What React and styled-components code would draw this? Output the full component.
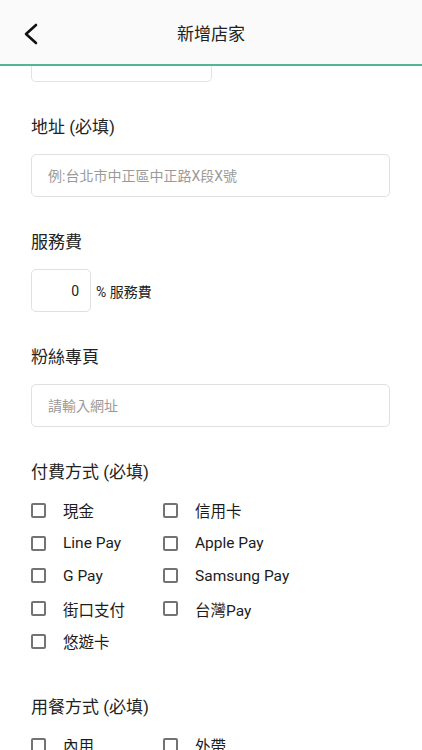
import React from 'react'
import styled, { createGlobalStyle } from 'styled-components'

const GlobalStyle = createGlobalStyle`
body {
    margin: 0;
    background: #ffffff;
    font-family: Roboto, "Noto Sans CJK TC", sans-serif;
    color: #222222;
}
`;

const Page = styled.div`
width: 422px;
height: 750px;
display: flex;
flex-direction: column;
overflow: hidden;
background: #ffffff;
`;

const Header = styled.header`
flex: 0 0 64px;
display: grid;
grid-template-columns: 64px 1fr 64px;
align-items: center;
background: #fafafa;
border-bottom: 2px solid #4fb891;
.title {
    text-align: center;
    font-size: 17px;
    color: #222;
}
`;

const BackButton = styled.button`
border: none;
background: none;
padding: 4px 0 0 22px;
height: 40px;
display: flex;
align-items: center;
`;

const Body = styled.div`
flex: 1;
overflow: hidden;
padding: 0 32px 0 31px;
`;

const CutInput = styled.div`
width: 179px;
height: 15px;
border: 1px solid #e2e2e2;
border-top: none;
border-radius: 0 0 5px 5px;
`;

const Section = styled.section`
padding-top: ${p => p.$gap || 33}px;
`;

const Label = styled.div`
font-size: 17px;
line-height: 24px;
margin-bottom: ${p => p.$space || 15}px;
`;

const TextInput = styled.input`
box-sizing: border-box;
width: ${p => p.$width || '100%'};
height: 43px;
border: 1px solid #e0e0e0;
border-radius: 5px;
padding: 0 ${p => p.$narrow ? '11px' : '16px'};
font-family: Roboto, "Noto Sans CJK TC", sans-serif;
font-size: 14px;
color: #222;
text-align: ${p => p.$narrow ? 'right' : 'left'};
outline: none;
&::placeholder {
    color: #9a9a9a;
}
`;

const FeeRow = styled.div`
display: flex;
align-items: center;
gap: 5px;
font-size: 14px;
color: #222;
`;

const CheckGrid = styled.div`
display: grid;
grid-template-columns: 132px 1fr;
grid-auto-rows: 32.75px;
margin-bottom: 4px;
`;

const CheckItem = styled.label`
display: flex;
align-items: center;
gap: 17px;
font-size: 15.5px;
color: #1c1c1c;
`;

const Box = styled.span`
box-sizing: border-box;
width: 15px;
height: 15px;
border: 2px solid #737373;
border-radius: 2px;
flex: 0 0 15px;
`;

const payments = ['現金', '信用卡', 'Line Pay', 'Apple Pay', 'G Pay', 'Samsung Pay', '街口支付', '台灣Pay', '悠遊卡']
const dining = ['內用', '外帶']

function Checks({ items }) {
    return (
        <CheckGrid>
            {items.map(item => (
                <CheckItem key={item}>
                    <Box />
                    {item}
                </CheckItem>
            ))}
        </CheckGrid>
    )
}

function App() {
    return (
        <Page>
            <GlobalStyle />
            <Header>
                <BackButton>
                    <svg width="16" height="24" viewBox="0 0 16 24">
                        <path d="M14 3 L4 12 L14 21" fill="none" stroke="#111" strokeWidth="2.6" strokeLinecap="round" strokeLinejoin="round" />
                    </svg>
                </BackButton>
                <div className="title">新增店家</div>
                <div />
            </Header>
            <Body>
                <CutInput />
                <Section>
                    <Label>地址 (必填)</Label>
                    <TextInput placeholder="例:台北市中正區中正路X段X號" />
                </Section>
                <Section>
                    <Label>服務費</Label>
                    <FeeRow>
                        <TextInput $width="60px" $narrow defaultValue="0" />
                        % 服務費
                    </FeeRow>
                </Section>
                <Section>
                    <Label>粉絲專頁</Label>
                    <TextInput placeholder="請輸入網址" />
                </Section>
                <Section>
                    <Label $space={10}>付費方式 (必填)</Label>
                    <Checks items={payments} />
                </Section>
                <Section>
                    <Label $space={10}>用餐方式 (必填)</Label>
                    <Checks items={dining} />
                </Section>
            </Body>
        </Page>
    )
}

export default App
